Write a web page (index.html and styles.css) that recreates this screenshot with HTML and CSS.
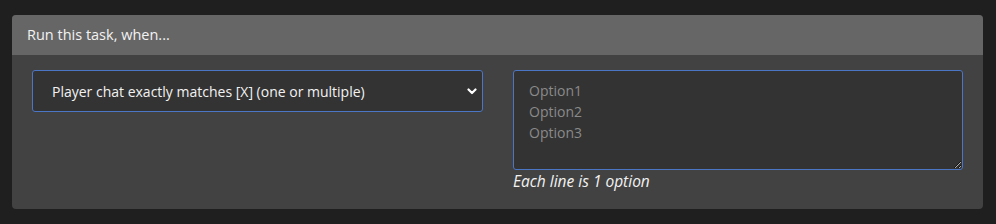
FILE: index.html
```html
<!DOCTYPE html>
<html>
<head>
<meta charset="utf-8">
<link rel="stylesheet" href="styles.css">
</head>
<body>
<div class="card">
  <div class="card-header">Run this task, when...</div>
  <div class="card-body">
    <div class="select-wrap">
      <select class="select">
        <option>Player chat exactly matches [X] (one or multiple)</option>
      </select>
      <svg class="chev" width="10" height="7" viewBox="0 0 10 7"><path d="M1.5 1.5 L5 5 L8.5 1.5" fill="none" stroke="#fff" stroke-width="2.2" stroke-linecap="round" stroke-linejoin="round"/></svg>
    </div>
    <div class="field">
      <textarea class="textarea" placeholder="Option1&#10;Option2&#10;Option3"></textarea>
      <div class="help">Each line is 1 option</div>
    </div>
  </div>
</div>
</body>
</html>
```
FILE: styles.css
```css
html, body {
  margin: 0;
  padding: 0;
  background: #1f1f1f;
  font-family: "Open Sans", "Liberation Sans", sans-serif;
}
body {
  padding: 15px 13px 15px 12px;
}
.card {
  background: #424242;
  border-radius: 4px;
  overflow: hidden;
  height: 194px;
}
.card-header {
  background: #666666;
  color: #f2f2f2;
  font-size: 14.5px;
  height: 40px;
  line-height: 40px;
  padding-left: 15px;
}
.card-body {
  display: grid;
  grid-template-columns: 451px 450px;
  column-gap: 30px;
  padding: 15px 20px 0 20px;
  align-items: start;
}
.select-wrap {
  position: relative;
}
.select {
  appearance: none;
  -webkit-appearance: none;
  width: 100%;
  height: 42px;
  box-sizing: border-box;
  background: #333333;
  border: 1px solid #4b76c5;
  border-radius: 3px;
  color: #f2f2f2;
  font-family: "Open Sans", "Liberation Sans", sans-serif;
  font-size: 14px;
  padding: 0 19px;
  outline: none;
}
.chev {
  position: absolute;
  right: 6px;
  top: 18px;
}
.field {
  display: flex;
  flex-direction: column;
}
.textarea {
  width: 100%;
  height: 100px;
  box-sizing: border-box;
  background: #333333;
  border: 1px solid #4b76c5;
  border-radius: 3px;
  color: #f2f2f2;
  font-family: "Open Sans", "Liberation Sans", sans-serif;
  font-size: 14px;
  line-height: 21px;
  padding: 9px 15px;
  margin: 0;
  outline: none;
  display: block;
}
.textarea::placeholder {
  color: #8a8a8a;
}
.help {
  color: #f2f2f2;
  font-style: italic;
  font-size: 15.5px;
  line-height: 22px;
  margin-top: 0;
}
```
